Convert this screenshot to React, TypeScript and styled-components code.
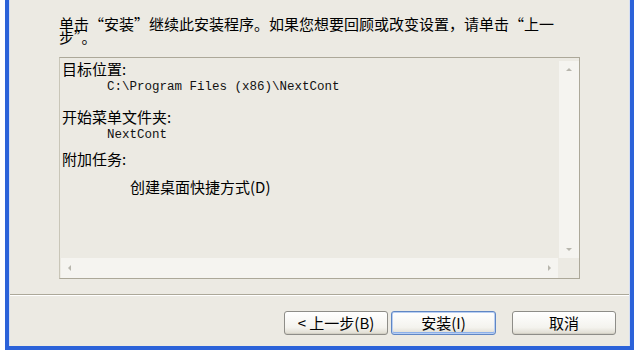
import React from "react";
import styled, { createGlobalStyle } from "styled-components";

const Global = createGlobalStyle`
  html, body { margin: 0; padding: 0; background: #ffffff; }
  body {
    width: 639px;
    height: 355px;
    overflow: hidden;
    font-family: "Noto Sans CJK SC", "Noto Sans", sans-serif;
    color: #000;
  }
`;

const Window = styled.div`
  margin-left: 5px;
  width: 621px;
  height: 346px;
  border: 4px solid #2b62d9;
  border-top: none;
  background: #eceae3;
  display: flex;
  flex-direction: column;
  box-shadow: inset 1px 0 0 #d6dff2, inset -1px 0 0 #d6dff2;
`;

const Top = styled.div`
  padding: 17px 0 0 50px;
  display: flex;
  flex-direction: column;
`;

const Title = styled.div`
  width: 497px;
  font-size: 15px;
  line-height: 13px;
`;

const Memo = styled.div`
  margin-top: 14px;
  width: 519px;
  height: 220px;
  border: 1px solid #aca899;
  border-left-color: #c9c6b8;
  display: grid;
  grid-template-columns: 1fr 20px;
  grid-template-rows: 1fr 20px;
  background: #eceae3;
`;

const MemoText = styled.div`
  padding: 4px 0 0 2px;
  overflow: hidden;
`;

const Label = styled.div<{ $gap: number }>`
  margin-top: ${(p) => p.$gap}px;
  font-size: 15px;
  line-height: 13px;
  white-space: nowrap;
`;

const Value = styled.div<{ $gap: number }>`
  margin-top: ${(p) => p.$gap}px;
  padding-left: 45px;
  font-family: "Liberation Mono", monospace;
  font-size: 12.5px;
  line-height: 12px;
  white-space: nowrap;
  color: #111;
`;

const Task = styled.div<{ $gap: number }>`
  margin-top: ${(p) => p.$gap}px;
  padding-left: 68px;
  font-size: 15px;
  line-height: 13px;
  white-space: nowrap;
`;

const VScroll = styled.div`
  margin-top: 3px;
  background: #f5f4f0;
  display: flex;
  flex-direction: column;
  justify-content: space-between;
`;

const HScroll = styled.div`
  margin: 0 1px;
  background: #f5f4f0;
  display: flex;
  justify-content: space-between;
`;

const ArrowBox = styled.div<{ $vertical: boolean }>`
  width: ${(p) => (p.$vertical ? "20px" : "17px")};
  height: ${(p) => (p.$vertical ? "17px" : "20px")};
  display: flex;
  align-items: center;
  justify-content: center;
`;

const Tri = styled.div<{ $dir: "up" | "down" | "left" | "right" }>`
  width: 0;
  height: 0;
  border: 3px solid transparent;
  ${(p) =>
    p.$dir === "up"
      ? "border-bottom-color: #b8b6ad; border-top-width: 0;"
      : p.$dir === "down"
      ? "border-top-color: #b8b6ad; border-bottom-width: 0;"
      : p.$dir === "left"
      ? "border-right-color: #b8b6ad; border-left-width: 0;"
      : "border-left-color: #b8b6ad; border-right-width: 0;"}
`;

const Separator = styled.div`
  margin: 15px 1px 0 1px;
  border-top: 1px solid #aca899;
  border-bottom: 1px solid #ffffff;
`;

const ButtonRow = styled.div`
  display: flex;
  justify-content: flex-end;
  padding: 15px 14px 0 0;
`;

const Button = styled.button<{ $primary?: boolean; $gapLeft: number; $w: number }>`
  margin-left: ${(p) => p.$gapLeft}px;
  width: ${(p) => p.$w}px;
  height: 24px;
  padding: 0;
  border: 1px solid ${(p) => (p.$primary ? "#5f86c4" : "#8e8d88")};
  border-radius: 3px;
  background: linear-gradient(#ffffff, #f4f3ee 70%, #dedbd0);
  box-shadow: ${(p) =>
    p.$primary
      ? "inset 0 0 0 1px #b9cff2, inset 0 -1px 0 1px #8cb0ea"
      : "inset 0 -1px 0 #d3d0c5"};
  font-family: "Noto Sans CJK SC", "Noto Sans", sans-serif;
  font-size: 15px;
  line-height: 22px;
  color: #000;
  text-align: center;
`;

function ScrollArrow({ dir }: { dir: "up" | "down" | "left" | "right" }) {
  return (
    <ArrowBox $vertical={dir === "up" || dir === "down"}>
      <Tri $dir={dir} />
    </ArrowBox>
  );
}

export default function App() {
  return (
    <>
      <Global />
      <Window lang="zh-CN">
        <Top>
          <Title>单击“安装”继续此安装程序。如果您想要回顾或改变设置，请单击“上一步”。</Title>
          <Memo>
            <MemoText>
              <Label $gap={0}>目标位置:</Label>
              <Value $gap={6}>C:\Program Files (x86)\NextCont</Value>
              <Label $gap={17}>开始菜单文件夹:</Label>
              <Value $gap={6}>NextCont</Value>
              <Label $gap={11}>附加任务:</Label>
              <Task $gap={15}>创建桌面快捷方式(D)</Task>
            </MemoText>
            <VScroll>
              <ScrollArrow dir="up" />
              <ScrollArrow dir="down" />
            </VScroll>
            <HScroll>
              <ScrollArrow dir="left" />
              <ScrollArrow dir="right" />
            </HScroll>
            <div />
          </Memo>
        </Top>
        <Separator />
        <ButtonRow>
          <Button $gapLeft={0} $w={104}>&lt; 上一步(B)</Button>
          <Button $primary $gapLeft={3} $w={105}>安装(I)</Button>
          <Button $gapLeft={16} $w={104}>取消</Button>
        </ButtonRow>
      </Window>
    </>
  );
}
